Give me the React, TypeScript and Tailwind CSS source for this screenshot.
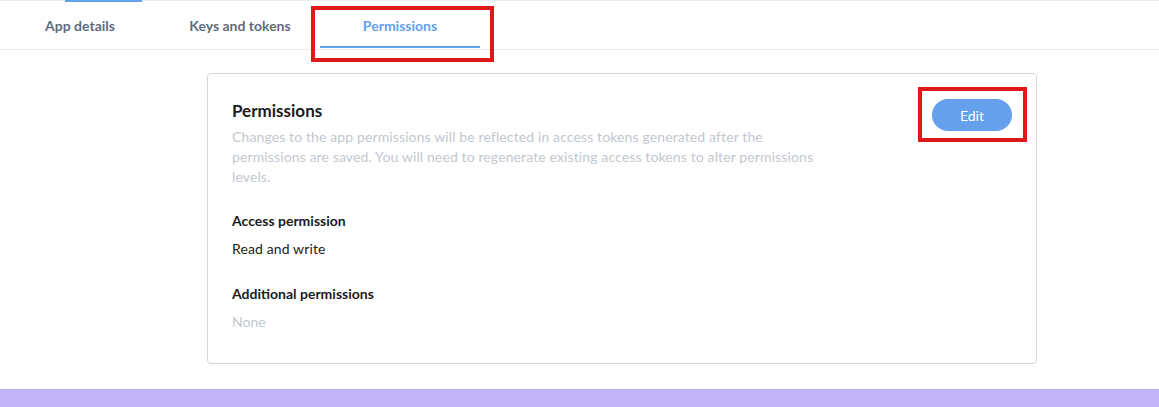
import React from "react";

export default function App() {
  const font = { fontFamily: "Lato, 'Noto Sans', sans-serif" };
  return (
    <div className="w-[1159px] h-[407px] bg-white flex flex-col overflow-hidden" style={font}>
      <div className="relative h-[50px] border-t border-b border-[#e9ebee] flex">
        <div className="absolute left-[65px] top-[-1px] w-[77px] h-[2px] bg-[#62a0ee]" />
        <div className="w-[160px] h-full flex items-center justify-center text-[14px] font-bold text-[#5f6b7a]">App details</div>
        <div className="w-[160px] h-full flex items-center justify-center text-[14px] font-bold text-[#5f6b7a]">Keys and tokens</div>
        <div className="relative w-[160px] h-full flex items-center justify-center text-[14px] font-bold text-[#62a0ee]">
          Permissions
          <div className="absolute left-0 right-0 bottom-[1px] h-[2px] bg-[#62a0ee]" />
          <div className="absolute left-[-9px] right-[-14px] top-[5px] bottom-[-13px] border-4 border-[#dc1a1a]" />
        </div>
      </div>
      <div className="flex-1 pt-[23px] pl-[207px]">
        <div className="w-[830px] h-[291px] border border-[#cfd6e0] rounded-[4px] px-[24px] pt-[24px] flex justify-between">
          <div className="flex flex-col">
            <div className="text-[17px] font-bold text-[#1b1b1b] leading-[24px] mt-[1px]">Permissions</div>
            <div className="text-[14px] leading-[20px] text-[#c2c8cf] w-[590px] mt-[4px] tracking-[0.12px]">
              Changes to the app permissions will be reflected in access tokens generated after the permissions are saved. You will need to regenerate existing access tokens to alter permissions levels.
            </div>
            <div className="text-[14px] font-bold text-[#1b1b1b] leading-[20px] mt-[24px]">Access permission</div>
            <div className="text-[14px] text-[#1b1b1b] leading-[20px] mt-[8px] tracking-[0.12px]">Read and write</div>
            <div className="text-[14px] font-bold text-[#1b1b1b] leading-[20px] mt-[25px]">Additional permissions</div>
            <div className="text-[14px] text-[#c2c8cf] leading-[20px] mt-[8px]">None</div>
          </div>
          <div className="relative mt-[1px] h-fit">
            <div className="w-[80px] h-[32px] rounded-full bg-[#64a0ec] text-white text-[14px] flex items-center justify-center">Edit</div>
            <div className="absolute left-[-14px] right-[-15px] top-[-12px] bottom-[-11px] border-4 border-[#dc1a1a]" />
          </div>
        </div>
      </div>
      <div className="h-[18px] bg-[#c1b5f8]" />
    </div>
  );
}
